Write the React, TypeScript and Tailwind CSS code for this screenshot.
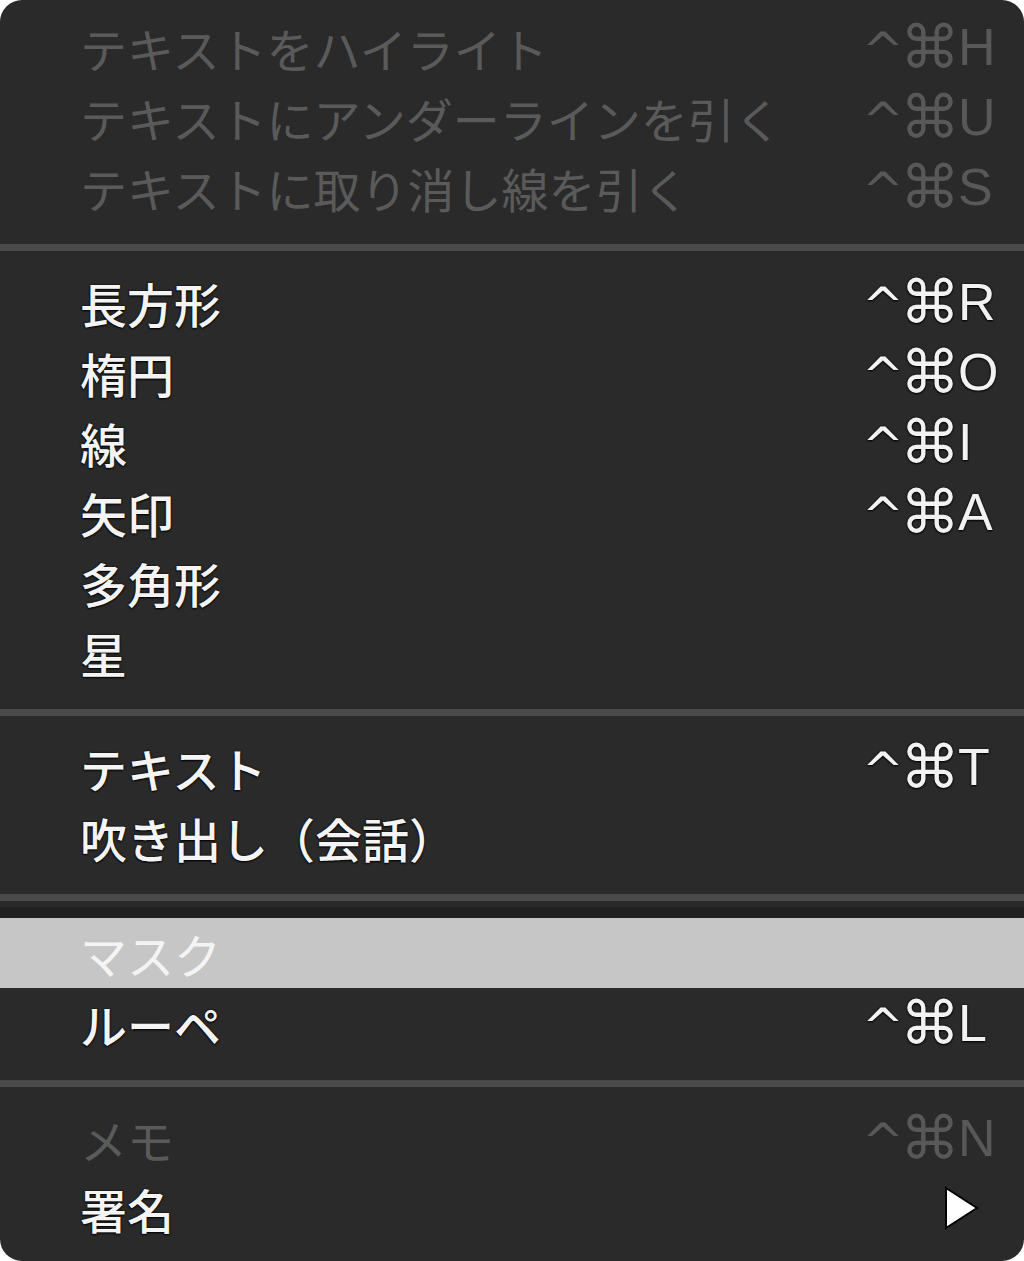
import React from "react";

type Item = {
  label: string;
  key?: string;
  disabled?: boolean;
  highlight?: boolean;
  submenu?: boolean;
};

const jp = "font-['Noto_Sans_CJK_JP','Noto_Sans',sans-serif]";

function Shortcut({ k, disabled }: { k: string; disabled?: boolean }) {
  const color = disabled ? "text-[#585858]" : "text-[#f2f2f2] [text-shadow:0_1px_2px_#000,0_0_2px_#000]";
  return (
    <div className={`flex items-center w-[140px] ${color}`}>
      <span className="w-[38px] font-['DejaVu_Sans',sans-serif] text-[50px] leading-none translate-y-[4px]">^</span>
      <span className="w-[58px] font-['DejaVu_Sans',sans-serif] text-[60px] leading-none">⌘</span>
      <span className="font-['Liberation_Sans',Arial,sans-serif] text-[52px] leading-none">{k}</span>
    </div>
  );
}

function Row({ item }: { item: Item }) {
  const textColor = item.highlight
    ? "text-[#f4f4f4]"
    : item.disabled
    ? "text-[#5a5a5a]"
    : "text-[#f4f4f4] font-medium [text-shadow:0_1px_2px_#000,0_0_2px_#000]";
  return (
    <div
      className={`h-[70px] flex items-center justify-between pl-[80px] pr-[22px] ${
        item.highlight ? "bg-[#c6c6c6]" : ""
      }`}
    >
      <span className={`${jp} text-[47px] leading-none whitespace-nowrap ${textColor}`}>{item.label}</span>
      {item.key ? (
        <Shortcut k={item.key} disabled={item.disabled} />
      ) : item.submenu ? (
        <div className="w-[140px] flex justify-end pr-[22px]">
          <svg width="36" height="44" viewBox="0 0 36 44">
            <polygon points="2,2 33,22 2,42" fill="#ffffff" stroke="#000" strokeWidth="2" />
          </svg>
        </div>
      ) : null}
    </div>
  );
}

function Sep({ dark }: { dark?: boolean }) {
  return (
    <div className="pt-[22px]">
      <div className="h-[7px] bg-[#4a4a4a]" />
      {dark ? (
        <>
          <div className="h-[6px]" />
          <div className="h-[11px] bg-[#212121]" />
        </>
      ) : (
        <div className="h-[16px]" />
      )}
    </div>
  );
}

export default function App() {
  const g1: Item[] = [
    { label: "テキストをハイライト", key: "H", disabled: true },
    { label: "テキストにアンダーラインを引く", key: "U", disabled: true },
    { label: "テキストに取り消し線を引く", key: "S", disabled: true },
  ];
  const g2: Item[] = [
    { label: "長方形", key: "R" },
    { label: "楕円", key: "O" },
    { label: "線", key: "I" },
    { label: "矢印", key: "A" },
    { label: "多角形" },
    { label: "星" },
  ];
  const g3: Item[] = [{ label: "テキスト", key: "T" }, { label: "吹き出し（会話）" }];
  const g4: Item[] = [{ label: "マスク", highlight: true }, { label: "ルーペ", key: "L" }];
  const g5: Item[] = [{ label: "メモ", key: "N", disabled: true }, { label: "署名", submenu: true }];

  return (
    <div className="w-[1024px] h-[1261px] bg-white">
      <div className="w-[1024px] h-[1261px] bg-[#2a2a2a] rounded-[22px] overflow-hidden pt-[12px]">
        {g1.map((i) => <Row key={i.label} item={i} />)}
        <Sep />
        {g2.map((i) => <Row key={i.label} item={i} />)}
        <Sep />
        {g3.map((i) => <Row key={i.label} item={i} />)}
        <Sep dark />
        {g4.map((i) => <Row key={i.label} item={i} />)}
        <Sep />
        {g5.map((i) => <Row key={i.label} item={i} />)}
      </div>
    </div>
  );
}
